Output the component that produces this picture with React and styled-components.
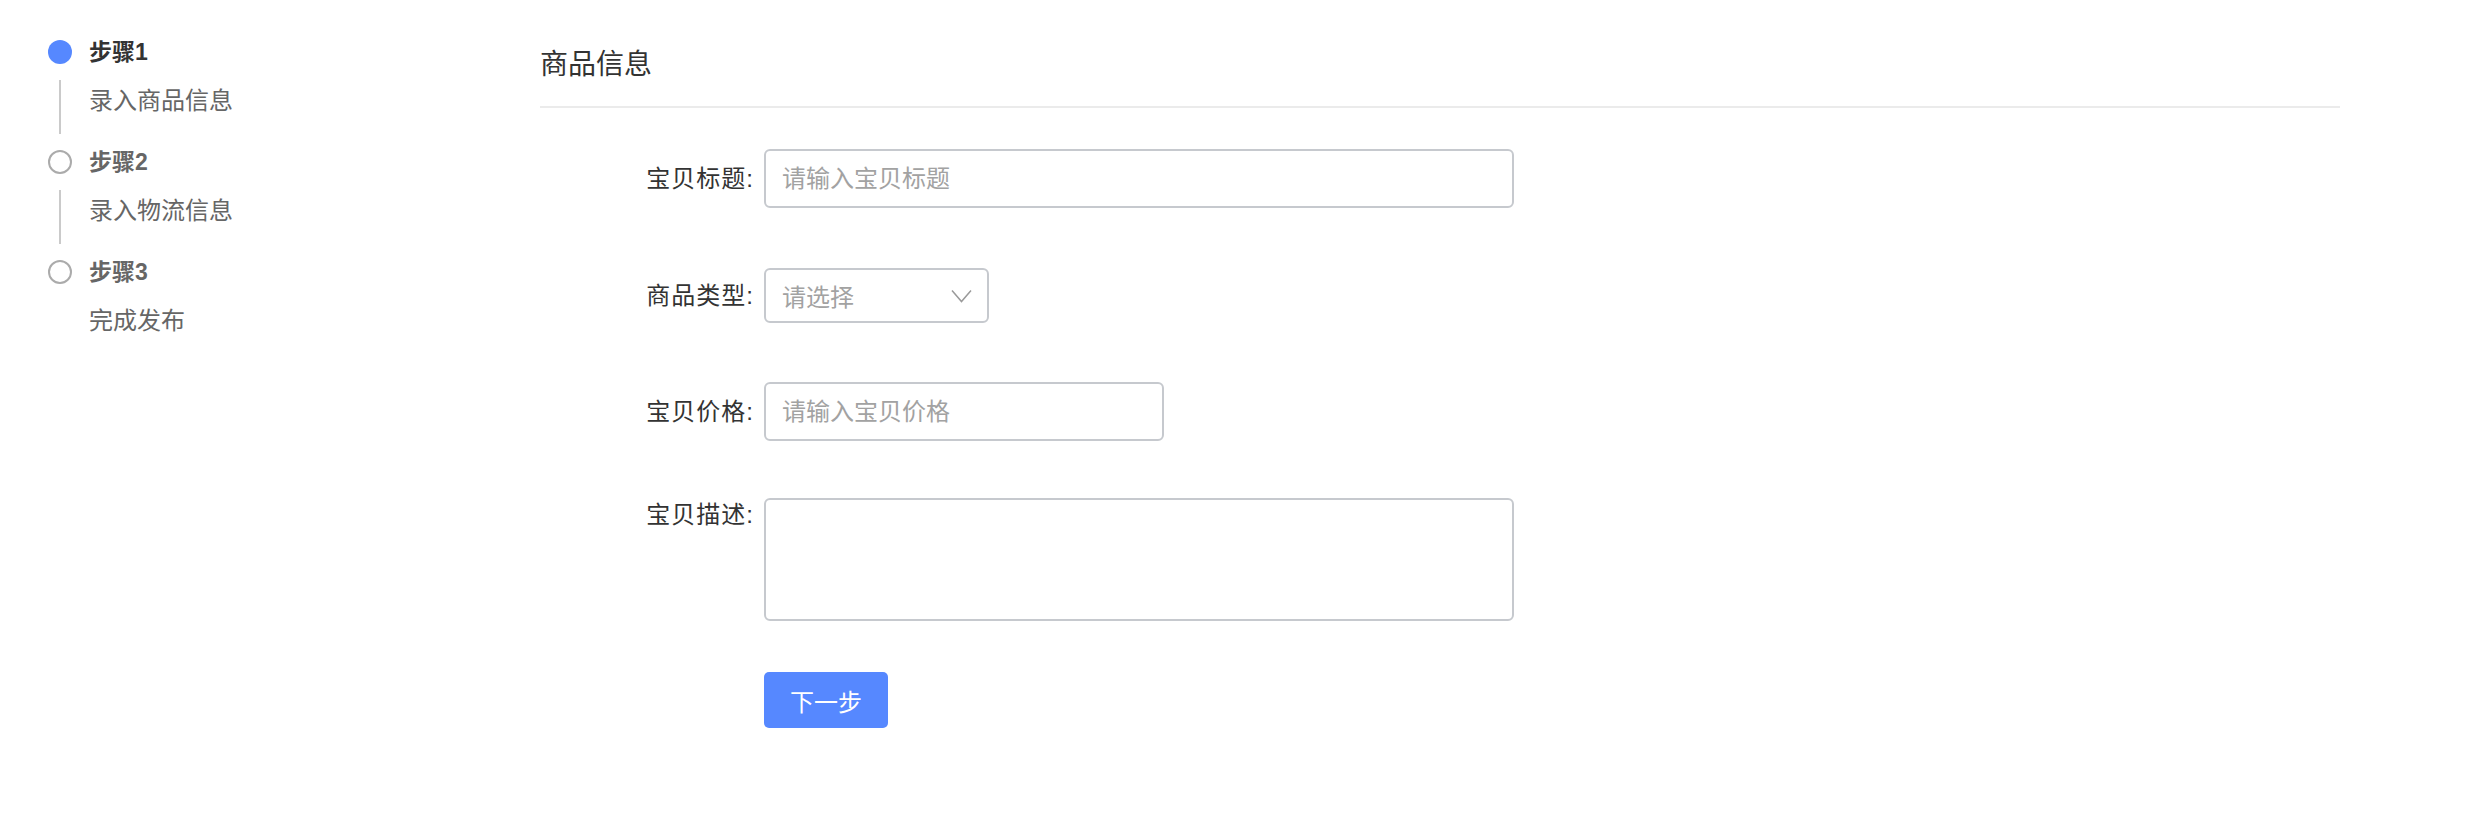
import styled, { createGlobalStyle } from 'styled-components';

const GlobalStyle = createGlobalStyle`
  body {
    margin: 0;
    background: #fff;
    font-family: "Liberation Sans", "Noto Sans CJK SC", sans-serif;
  }
  * {
    box-sizing: border-box;
  }
`;

const Page = styled.div`
  display: flex;
  width: 2480px;
  min-height: 818px;
`;

const Sidebar = styled.div`
  width: 540px;
  flex-shrink: 0;
  padding: 40px 0 0 48px;
`;

const Step = styled.div`
  display: grid;
  grid-template-columns: 24px 1fr;
  grid-template-rows: 24px 86px;
  column-gap: 17px;
`;

const Dot = styled.span`
  width: 24px;
  height: 24px;
  border-radius: 50%;
  background: ${(p) => (p.$active ? '#5688ff' : '#fff')};
  border: ${(p) => (p.$active ? 'none' : '2px solid #ababab')};
`;

const StepTitle = styled.div`
  font-size: 23px;
  line-height: 24px;
  font-weight: 700;
  color: ${(p) => (p.$active ? '#333' : '#666')};
`;

const Rail = styled.div`
  display: flex;
  justify-content: center;
  padding: 16px 0;
`;

const RailLine = styled.span`
  width: 2px;
  background: ${(p) => (p.$hidden ? 'transparent' : '#cacaca')};
`;

const StepDesc = styled.div`
  padding-top: 21px;
  font-size: 24px;
  line-height: 32px;
  color: #666;
`;

const Main = styled.div`
  width: 1800px;
  display: flex;
  flex-direction: column;
`;

const Heading = styled.h2`
  margin: 45px 0 0;
  font-size: 28px;
  line-height: 40px;
  font-weight: 400;
  color: #333;
`;

const Divider = styled.div`
  height: 2px;
  margin-top: 21px;
  background: #ebebeb;
`;

const Form = styled.form`
  display: flex;
  flex-direction: column;
  padding-top: 41px;
`;

const Row = styled.div`
  display: flex;
  align-items: ${(p) => (p.$top ? 'flex-start' : 'center')};
  margin-bottom: ${(p) => p.$space}px;
`;

const Label = styled.label`
  width: 224px;
  flex-shrink: 0;
  padding-right: 10px;
  text-align: right;
  font-size: 24px;
  line-height: 34px;
  letter-spacing: 1px;
  color: #333;
`;

const fieldBase = `
  border: 2px solid #c6c9ce;
  border-radius: 6px;
  background: #fff;
  font-family: inherit;
  font-size: 24px;
  color: #333;
  outline: none;
  &::placeholder {
    color: #a2a2a2;
  }
`;

const TextInput = styled.input`
  ${fieldBase}
  width: ${(p) => p.$width}px;
  height: 59px;
  padding: 0 16px;
`;

const TextArea = styled.textarea`
  ${fieldBase}
  width: 750px;
  height: 123px;
  padding: 12px 16px;
  resize: none;
`;

const Select = styled.div`
  ${fieldBase}
  width: 225px;
  height: 55px;
  padding: 0 15px 0 16px;
  display: flex;
  align-items: center;
  justify-content: space-between;
  color: #a2a2a2;
`;

const SubmitButton = styled.button`
  width: 124px;
  height: 56px;
  margin-left: 224px;
  border: none;
  border-radius: 5px;
  background: #5688ff;
  color: #fff;
  font-family: inherit;
  font-size: 24px;
  cursor: pointer;
`;

const steps = [
  { title: '步骤1', desc: '录入商品信息' },
  { title: '步骤2', desc: '录入物流信息' },
  { title: '步骤3', desc: '完成发布' },
];

function Chevron() {
  return (
    <svg width="21" height="14" viewBox="0 0 21 14" fill="none">
      <path d="M1 1.5 L10.5 12.5 L20 1.5" stroke="#9a9a9a" strokeWidth="1.5" />
    </svg>
  );
}

export default function App() {
  return (
    <>
      <GlobalStyle />
      <Page>
        <Sidebar>
          {steps.map((s, i) => (
            <Step key={s.title}>
              <Dot $active={i === 0} />
              <StepTitle $active={i === 0}>{s.title}</StepTitle>
              <Rail>
                <RailLine $hidden={i === steps.length - 1} />
              </Rail>
              <StepDesc>{s.desc}</StepDesc>
            </Step>
          ))}
        </Sidebar>
        <Main>
          <Heading>商品信息</Heading>
          <Divider />
          <Form onSubmit={(e) => e.preventDefault()}>
            <Row $space={60}>
              <Label>宝贝标题:</Label>
              <TextInput $width={750} placeholder="请输入宝贝标题" />
            </Row>
            <Row $space={59}>
              <Label>商品类型:</Label>
              <Select>
                <span>请选择</span>
                <Chevron />
              </Select>
            </Row>
            <Row $space={57}>
              <Label>宝贝价格:</Label>
              <TextInput $width={400} placeholder="请输入宝贝价格" />
            </Row>
            <Row $space={51} $top>
              <Label>宝贝描述:</Label>
              <TextArea />
            </Row>
            <SubmitButton type="submit">下一步</SubmitButton>
          </Form>
        </Main>
      </Page>
    </>
  );
}
